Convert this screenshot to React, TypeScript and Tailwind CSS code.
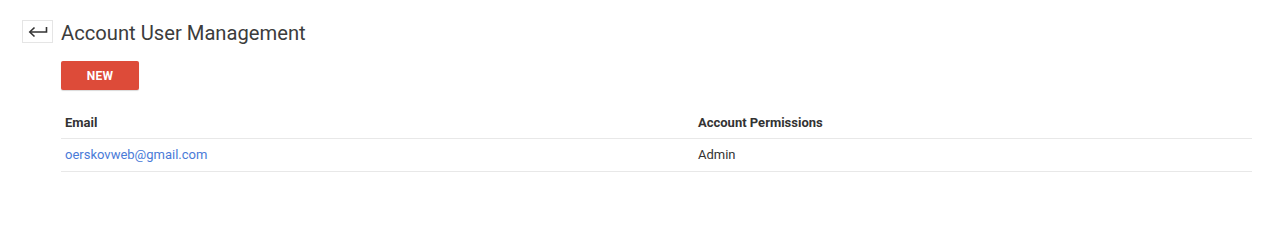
const users = [{ email: 'oerskovweb@gmail.com', permission: 'Admin' }];

function BackArrow() {
  return (
    <svg width="20" height="12" viewBox="0 0 20 12" fill="none" stroke="#333" strokeWidth="1.6">
      <path d="M18.5 1v5H2" />
      <path d="M6.5 1.5L1.8 6l4.7 4.5" />
    </svg>
  );
}

export default function App() {
  return (
    <div className="min-h-[243px] bg-white font-['Roboto',sans-serif] text-[#333] pt-5 pl-[22px] pr-[21px]">
      <div className="flex items-center h-[23px]">
        <button className="w-[31px] h-[23px] border border-[#e5e5e5] flex items-center justify-center bg-white">
          <BackArrow />
        </button>
        <h1 className="ml-2 pt-[3px] text-[20.2px] leading-[23px] text-[#3c3c3c]">Account User Management</h1>
      </div>

      <div className="ml-[39px]">
        <button className="mt-[18px] w-[78px] h-[29px] rounded-[2px] bg-[#dd4b39] text-white text-[12px] font-bold tracking-[0.2px] shadow-[0_1px_1px_rgba(0,0,0,0.15)]">
          NEW
        </button>

        <div className="mt-[14px]">
          <div className="grid grid-cols-[633px_1fr] h-[35px] items-center border-b border-[#e8e8e8] text-[13px] font-bold text-[#333]">
            <div className="pl-1 pt-[3px]">Email</div>
            <div className="pl-1 pt-[3px]">Account Permissions</div>
          </div>
          {users.map((u) => (
            <div
              key={u.email}
              className="grid grid-cols-[633px_1fr] h-[33px] items-center border-b border-[#e8e8e8] text-[13px]"
            >
              <div className="pl-1 text-[#4a7bd8]">{u.email}</div>
              <div className="pl-1 text-[#333]">{u.permission}</div>
            </div>
          ))}
        </div>
      </div>
    </div>
  );
}
